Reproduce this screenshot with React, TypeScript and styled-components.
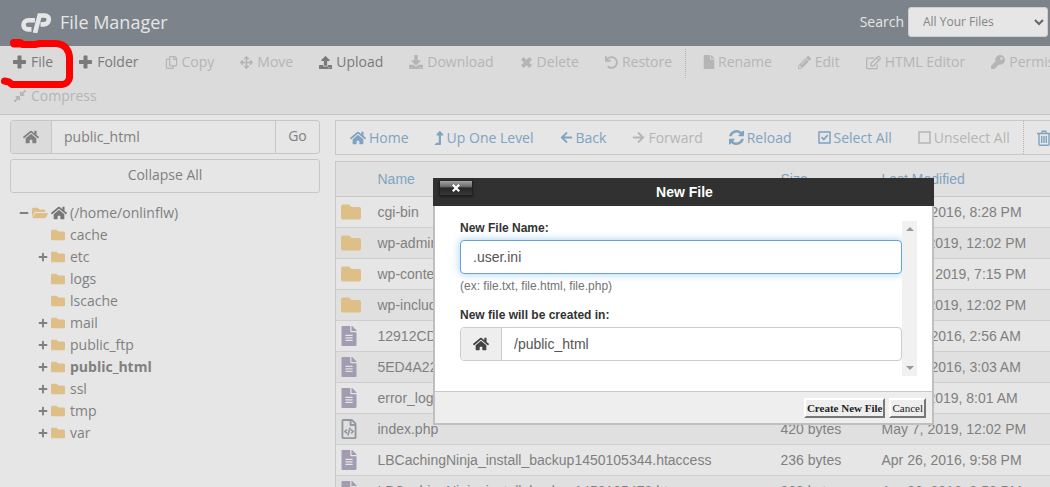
import React, { ReactNode } from "react";
import styled, { createGlobalStyle, css } from "styled-components";
import {
  FaPlus, FaMinus, FaRegCopy, FaArrowsAlt, FaUpload, FaDownload, FaFile,
  FaPencilAlt, FaRegEdit, FaKey, FaCompressAlt, FaHome, FaLevelUpAlt, FaArrowLeft,
  FaArrowRight, FaFolder, FaFolderOpen, FaFileAlt, FaRegFileCode, FaUndo,
} from "react-icons/fa";

const ui = `"Open Sans", "Noto Sans", sans-serif`;
const grid = `"Liberation Sans", Arial, sans-serif`;

const GlobalStyle = createGlobalStyle`
  * { box-sizing: border-box; }
  body { margin: 0; background: #e6e6e6; color: #808080; font: 14px/20px ${ui}; }
  button, input, select { font: inherit; color: inherit; margin: 0; }
`;

const Page = styled.div`
  position: relative;
  display: flex;
  flex-direction: column;
  height: 100vh;
  overflow: hidden;
`;

const Header = styled.header`
  display: flex;
  align-items: center;
  flex: none;
  height: 46px;
  padding: 0 2px 2px 20px;
  background: #7c838a;
  color: #e6e6e6;
`;

const Title = styled.h1`
  flex: 1;
  margin: 0 0 0 8px;
  font-size: 18px;
  line-height: 24px;
  font-weight: 400;
`;

const SearchLabel = styled.label`
  margin-right: 4px;
`;

const SelectWrap = styled.span`
  position: relative;
  display: flex;
  width: 140px;
  svg { position: absolute; right: 4px; top: 12px; pointer-events: none; }
`;

const ScopeSelect = styled.select`
  appearance: none;
  width: 100%;
  height: 30px;
  padding: 0 14px;
  border: 1px solid #cfcfcf;
  border-radius: 3px;
  background: #e6e6e6;
  color: #858585;
  font-size: 12px;
`;

const Toolbar = styled.nav`
  flex: none;
  background: #dbdbdb;
  border-bottom: 1px solid #c4c4c4;
`;

const ToolRow = styled.div`
  display: flex;
  height: 34px;
  padding-bottom: 2px;
  overflow: hidden;
`;

const ToolButton = styled.button<{ $tone?: "link" | "off" }>`
  display: flex;
  flex: none;
  align-items: center;
  gap: 4px;
  padding: 0 13px;
  border: 0;
  background: none;
  white-space: nowrap;
  color: ${p => (p.$tone === "link" ? "#7fa3c0" : p.$tone === "off" ? "#b5b5b5" : "#7a7a7a")};
  svg { flex: none; }
`;

const NarrowIcon = styled.span<{ $w: number }>`
  display: flex;
  justify-content: center;
  width: ${p => p.$w}px;
`;

const Divider = styled.span`
  flex: none;
  width: 1px;
  margin: 3px 4px 0 0;
  border-left: 1px dotted #b4b4b4;
`;

const Workspace = styled.main`
  display: flex;
  flex: 1;
  gap: 15px;
  min-height: 0;
  padding: 5px 0 0 10px;
`;

const Sidebar = styled.aside`
  flex: none;
  width: 310px;
`;

const PathGroup = styled.form`
  display: flex;
  height: 34px;
  border: 1px solid #c6c6c6;
  border-radius: 3px;
`;

const Addon = styled.span<{ $bright?: boolean }>`
  display: flex;
  align-items: center;
  justify-content: center;
  width: 41px;
  border-right: 1px solid ${p => (p.$bright ? "#ccc" : "#c6c6c6")};
  background: ${p => (p.$bright ? "#eee" : "#dbdbdb")};
  color: ${p => (p.$bright ? "#444" : "#808080")};
`;

const PathInput = styled.input`
  flex: 1;
  min-width: 0;
  padding: 0 12px;
  border: 0;
  background: none;
  outline: 0;
`;

const GoButton = styled.button`
  width: 44px;
  padding: 0 0 2px;
  border: 0;
  border-left: 1px solid #c6c6c6;
  background: none;
`;

const CollapseButton = styled.button`
  width: 100%;
  height: 34px;
  margin-top: 5px;
  padding: 0 0 2px;
  border: 1px solid #c6c6c6;
  border-radius: 3px;
  background: none;
`;

const Tree = styled.ul`
  margin: 9px 0 0;
  padding: 0;
  list-style: none;
`;

const TreeRow = styled.li<{ $root?: boolean; $current?: boolean }>`
  display: flex;
  align-items: center;
  gap: 3px;
  height: 22px;
  padding-left: ${p => (p.$root ? 9 : 28)}px;
  font-weight: ${p => (p.$current ? 700 : 400)};
`;

const Toggle = styled.span`
  display: flex;
  width: 10px;
`;

const TreeIcon = styled.span<{ $plain?: boolean }>`
  display: flex;
  width: 16px;
  color: ${p => (p.$plain ? "#777" : "#dfbf88")};
`;

const Files = styled.section`
  display: flex;
  flex-direction: column;
  flex: 1;
  gap: 6px;
  min-width: 0;
`;

const FileBar = styled.nav`
  display: flex;
  flex: none;
  height: 35px;
  padding-left: 1px;
  overflow: hidden;
  border: 1px solid #c8c8c8;
  border-right: 0;
  ${ToolButton} { gap: 3px; }
  ${Divider} { margin: 0; }
`;

const FileTable = styled.table`
  width: 100%;
  border-collapse: collapse;
  table-layout: fixed;
  border-left: 1px solid #c8c8c8;
  font: 14px/20px ${grid};
  white-space: nowrap;
`;

const Th = styled.th<{ $w?: number }>`
  width: ${p => (p.$w ? p.$w + "px" : "auto")};
  height: 35px;
  padding: 0;
  border-top: 1px solid #c8c8c8;
  border-bottom: 1px solid #c8c8c8;
  background: #e0e0e0;
  color: #7fa3c0;
  font-weight: 400;
  text-align: left;
`;

const FileRow = styled.tr`
  &:nth-child(even) { background: #e0e0e0; }
`;

const Td = styled.td`
  height: 31px;
  padding: 0;
  border-bottom: 1px solid #cecece;
`;

const FileIcon = styled.span<{ $kind: Kind }>`
  display: flex;
  padding-left: ${p => (p.$kind === "dir" ? 5 : 3)}px;
  color: ${p => (p.$kind === "dir" ? "#dfbf88" : p.$kind === "doc" ? "#a39cb0" : "#92979e")};
`;

const Dialog = styled.div`
  position: absolute;
  top: 178px;
  left: 433px;
  width: 501px;
  font: 12px/16px ${grid};
  color: #333;
`;

const DialogHead = styled.div`
  display: flex;
  align-items: center;
  height: 28px;
  padding: 0 7px;
  background: #313131;
  color: #fff;
`;

const DialogTitle = styled.h2`
  flex: 1;
  margin: 0 30px 0 0;
  font-size: 14px;
  line-height: 20px;
  text-align: center;
`;

const CloseButton = styled.button`
  display: flex;
  align-items: center;
  justify-content: center;
  align-self: flex-start;
  width: 32px;
  height: 14px;
  margin-top: 3px;
  padding: 0;
  border: 0;
  background: linear-gradient(#a8a2a5, #6a6a6a 40%, #262626 50%, #383838);
  box-shadow: 0 1px 2px 1px #1c1c1c;
`;

const DialogFrame = styled.div`
  border: solid #bfbfbf;
  border-width: 0 2px 2px;
`;

const DialogBody = styled.div`
  display: flex;
  height: 185px;
  padding: 15px 15px 15px 25px;
  background: #fff;
`;

const Fields = styled.div`
  display: flex;
  flex-direction: column;
  flex: 1;
`;

const fieldBox = css`
  height: 34px;
  border: 1px solid #ccc;
  border-radius: 4px;
  color: #555;
  font-size: 14px;
`;

const FieldLabel = styled.label`
  padding-bottom: 5px;
  line-height: 14px;
  font-weight: 700;
`;

const NameInput = styled.input`
  ${fieldBox}
  padding: 0 12px;
  border-color: #66a3dd;
  outline: 0;
  box-shadow: 0 0 8px rgba(102, 175, 233, 0.6);
`;

const Hint = styled.small`
  padding: 4px 0 14px;
  color: #737373;
  font-size: 12px;
`;

const LocationBox = styled.div`
  ${fieldBox}
  display: flex;
  overflow: hidden;
  flex: none;
`;

const ScrollTrack = styled.div`
  display: flex;
  flex-direction: column;
  justify-content: space-between;
  align-items: center;
  width: 15px;
  padding: 6px 0;
  background: #f1f1f1;
`;

const DialogFoot = styled.div`
  display: flex;
  justify-content: flex-end;
  gap: 4px;
  height: 32px;
  padding: 6px 6px 5px;
  border-top: 1px solid #c8c8c8;
  background: #eee;
`;

const FootButton = styled.button<{ $primary?: boolean }>`
  padding: 0 1px;
  border: 2px solid;
  border-color: #fff #777 #777 #fff;
  background: #eee;
  color: #222;
  font: ${p => (p.$primary ? 700 : 400)} 11px/14px "Liberation Serif", "Times New Roman", serif;
`;

const Marker = styled.svg`
  position: absolute;
  top: 36px;
  left: 0;
  pointer-events: none;
`;

type Kind = "dir" | "doc" | "code";
type Tool = { label: string; icon: ReactNode; tone?: "link" | "off"; divide?: boolean };

const Logo = () => (
  <svg width="32" height="22" viewBox="0 -1 32 22" fill="none" stroke="#e6e6e6" strokeWidth="4.600">
    <path d="M15 8.300H8.500C5.500 8.300 3.500 10.300 3.500 13S5.500 17.400 8.200 17.400H11.500" />
    <path d="M15 21L19.600 3.500H24.500C27.500 3.500 29.100 5.500 28.800 8S26.500 12.400 23.800 12.400H20.500" />
  </svg>
);

const Plus = () => (
  <svg width="14" height="14" viewBox="0 0 14 14" fill="currentColor">
    <path d="M5.300.500h2.400q.8 0 .8.800V5h3.700q.8 0 .8.800v2.400q0 .8-.8.800H8.500v3.700q0 .8-.8.800H5.300q-.8 0-.8-.8V9H.8Q0 9 0 8.200V5.800Q0 5 .8 5H4.500V1.300Q4.500.5 5.300.5z" />
  </svg>
);

const Cross = () => (
  <svg width="13" height="13" viewBox="0 0 14 14" stroke="currentColor" strokeWidth="4">
    <path d="M2.500 2.500l9 9M11.500 2.500l-9 9" />
  </svg>
);

const Refresh = () => (
  <svg width="15" height="15" viewBox="0 0 1536 1536" fill="currentColor">
    <path d="M1511 928q0 5-1 7-64 268-268 434.500T764 1536q-146 0-282.500-55T238 1324l-129 129q-19 19-45 19t-45-19-19-45V960q0-26 19-45t45-19h448q26 0 45 19t19 45-19 45l-137 137q71 66 161 102t187 36q134 0 250-65t186-179q11-17 53-117 8-23 30-23h192q13 0 22.500 9.500t9.500 22.500zm25-800v448q0 26-19 45t-45 19h-448q-26 0-45-19t-19-45 19-45l138-138Q969 256 768 256q-134 0-250 65T332 500q-11 17-53 117-8 23-30 23H50q-13 0-22.500-9.500T18 608v-7q65-268 270-434.500T768 0q146 0 284 55.500T1297 212l130-129q19-19 45-19t45 19 19 45z" />
  </svg>
);

const Box = ({ checked }: { checked?: boolean }) => (
  <svg width="13" height="13" viewBox="0 0 13 13" fill="none" stroke="currentColor">
    <rect x="1" y="1" width="11" height="11" strokeWidth="1.500" />
    {checked && <path d="M3.500 6.200l2.200 2.300 4-4.300" strokeWidth="1.800" />}
  </svg>
);

const Trash = () => (
  <svg width="14" height="16" viewBox="0 0 14 16" fill="none" stroke="currentColor" strokeWidth="1.400">
    <path d="M0 3.500h14M4.500 3.500l.8-2.300h3.400l.8 2.300M2 3.500v10.700q0 1 1 1h8q1 0 1-1V3.500M4.700 6v7M7 6v7M9.300 6v7" />
  </svg>
);

const topTools: Tool[] = [
  { label: "File", icon: <Plus /> },
  { label: "Folder", icon: <Plus /> },
  { label: "Copy", icon: <FaRegCopy size={13} />, tone: "off" },
  { label: "Move", icon: <FaArrowsAlt size={13} />, tone: "off" },
  { label: "Upload", icon: <FaUpload size={13} /> },
  { label: "Download", icon: <FaDownload size={14} />, tone: "off" },
  { label: "Delete", icon: <Cross />, tone: "off" },
  { label: "Restore", icon: <FaUndo size={13} />, tone: "off" },
  { label: "Rename", icon: <NarrowIcon $w={11}><FaFile size={14} /></NarrowIcon>, tone: "off", divide: true },
  { label: "Edit", icon: <FaPencilAlt size={13} />, tone: "off" },
  { label: "HTML Editor", icon: <FaRegEdit size={15} />, tone: "off" },
  { label: "Permissions", icon: <FaKey size={14} />, tone: "off" },
];

const fileTools: Tool[] = [
  { label: "Home", icon: <FaHome size={16} />, tone: "link" },
  { label: "Up One Level", icon: <NarrowIcon $w={9}><FaLevelUpAlt size={14} /></NarrowIcon>, tone: "link" },
  { label: "Back", icon: <FaArrowLeft size={13} />, tone: "link" },
  { label: "Forward", icon: <FaArrowRight size={13} />, tone: "off" },
  { label: "Reload", icon: <Refresh />, tone: "link" },
  { label: "Select All", icon: <Box checked />, tone: "link" },
  { label: "Unselect All", icon: <Box />, tone: "off" },
  { label: "View Trash", icon: <Trash />, tone: "link", divide: true },
];

const folders = [
  { name: "cache" }, { name: "etc", open: true }, { name: "logs" }, { name: "lscache" },
  { name: "mail", open: true }, { name: "public_ftp", open: true },
  { name: "public_html", open: true, current: true },
  { name: "ssl", open: true }, { name: "tmp", open: true }, { name: "var", open: true },
];

const files: [Kind, string, string, string][] = [
  ["dir", "cgi-bin", "4 KB", "Apr 26, 2016, 8:28 PM"],
  ["dir", "wp-admin", "4 KB", "May 7, 2019, 12:02 PM"],
  ["dir", "wp-content", "4 KB", "May 12, 2019, 7:15 PM"],
  ["dir", "wp-includes", "12 KB", "May 7, 2019, 12:02 PM"],
  ["doc", "12912CD", "41 bytes", "Apr 27, 2016, 2:56 AM"],
  ["doc", "5ED4A22", "41 bytes", "Apr 27, 2016, 3:03 AM"],
  ["doc", "error_log", "2 KB", "May 8, 2019, 8:01 AM"],
  ["code", "index.php", "420 bytes", "May 7, 2019, 12:02 PM"],
  ["doc", "LBCachingNinja_install_backup1450105344.htaccess", "236 bytes", "Apr 26, 2016, 9:58 PM"],
  ["doc", "LBCachingNinja_install_backup1450105473.htaccess", "369 bytes", "Apr 26, 2016, 9:58 PM"],
];

const kindIcon: Record<Kind, ReactNode> = {
  dir: <FaFolder size={20} />,
  doc: <FaFileAlt size={20} />,
  code: <FaRegFileCode size={20} />,
};

const Tools = ({ items }: { items: Tool[] }) => (
  <>
    {items.map(t => (
      <React.Fragment key={t.label}>
        {t.divide && <Divider />}
        <ToolButton type="button" $tone={t.tone}>{t.icon}{t.label}</ToolButton>
      </React.Fragment>
    ))}
  </>
);

export default function App() {
  return (
    <Page>
      <GlobalStyle />
      <Header>
        <Logo />
        <Title>File Manager</Title>
        <SearchLabel htmlFor="scope">Search</SearchLabel>
        <SelectWrap>
          <ScopeSelect id="scope"><option>All Your Files</option></ScopeSelect>
          <svg width="10" height="7" viewBox="0 0 10 7" fill="none" stroke="#666" strokeWidth="2">
            <path d="M1 1l4 4 4-4" />
          </svg>
        </SelectWrap>
      </Header>

      <Toolbar>
        <ToolRow><Tools items={topTools} /></ToolRow>
        <ToolRow><Tools items={[{ label: "Compress", icon: <FaCompressAlt size={14} />, tone: "off" }]} /></ToolRow>
      </Toolbar>

      <Workspace>
        <Sidebar>
          <PathGroup onSubmit={e => e.preventDefault()}>
            <Addon><FaHome size={16} /></Addon>
            <PathInput aria-label="Path" defaultValue="public_html" />
            <GoButton>Go</GoButton>
          </PathGroup>
          <CollapseButton type="button">Collapse All</CollapseButton>
          <Tree>
            <TreeRow $root>
              <Toggle><FaMinus size={10} /></Toggle>
              <TreeIcon><FaFolderOpen size={16} /></TreeIcon>
              <TreeIcon $plain><FaHome size={16} /></TreeIcon>
              (/home/onlinflw)
            </TreeRow>
            {folders.map(f => (
              <TreeRow key={f.name} $current={f.current}>
                <Toggle>{f.open && <FaPlus size={10} />}</Toggle>
                <TreeIcon><FaFolder size={14} /></TreeIcon>
                {f.name}
              </TreeRow>
            ))}
          </Tree>
        </Sidebar>

        <Files>
          <FileBar><Tools items={fileTools} /></FileBar>
          <FileTable>
            <thead>
              <tr>
                <Th $w={42} aria-label="Type" />
                <Th $w={403}>Name</Th>
                <Th $w={101}>Size</Th>
                <Th>Last Modified</Th>
              </tr>
            </thead>
            <tbody>
              {files.map(([kind, name, size, modified]) => (
                <FileRow key={name}>
                  <Td><FileIcon $kind={kind}>{kindIcon[kind]}</FileIcon></Td>
                  <Td>{name}</Td>
                  <Td>{size}</Td>
                  <Td>{modified}</Td>
                </FileRow>
              ))}
            </tbody>
          </FileTable>
        </Files>
      </Workspace>

      <Dialog role="dialog" aria-labelledby="dialog-title">
        <DialogHead>
          <CloseButton type="button" aria-label="Close">
            <svg width="8" height="8" viewBox="0 0 8 8" stroke="#fff" strokeWidth="2.200">
              <path d="M.8.800l6.400 6.400M7.200.800L.8 7.200" />
            </svg>
          </CloseButton>
          <DialogTitle id="dialog-title">New File</DialogTitle>
        </DialogHead>
        <DialogFrame>
          <DialogBody>
            <Fields>
              <FieldLabel htmlFor="file-name">New File Name:</FieldLabel>
              <NameInput id="file-name" defaultValue=".user.ini" />
              <Hint>(ex: file.txt, file.html, file.php)</Hint>
              <FieldLabel htmlFor="file-dir">New file will be created in:</FieldLabel>
              <LocationBox>
                <Addon $bright><FaHome size={16} /></Addon>
                <PathInput id="file-dir" defaultValue="/public_html" />
              </LocationBox>
            </Fields>
            <ScrollTrack>
              <svg width="8" height="4" viewBox="0 0 8 4"><path d="M0 4L4 0l4 4z" fill="#999" /></svg>
              <svg width="8" height="4" viewBox="0 0 8 4"><path d="M0 0l4 4 4-4z" fill="#999" /></svg>
            </ScrollTrack>
          </DialogBody>
          <DialogFoot>
            <FootButton type="button" $primary>Create New File</FootButton>
            <FootButton type="button">Cancel</FootButton>
          </DialogFoot>
        </DialogFrame>
      </Dialog>

      <Marker width="80" height="56" viewBox="0 0 80 56" fill="none" stroke="#f00" strokeWidth="7" strokeLinecap="round" strokeLinejoin="round">
        <path d="M13.500 6.500H20L23 8.500H35L40 7.500H55Q63 8 66 12Q69.500 16 69.500 22V42Q68 48 62 48.500H12L9 46L4.500 45" />
        <path d="M14 8H21" />
      </Marker>
    </Page>
  );
}
